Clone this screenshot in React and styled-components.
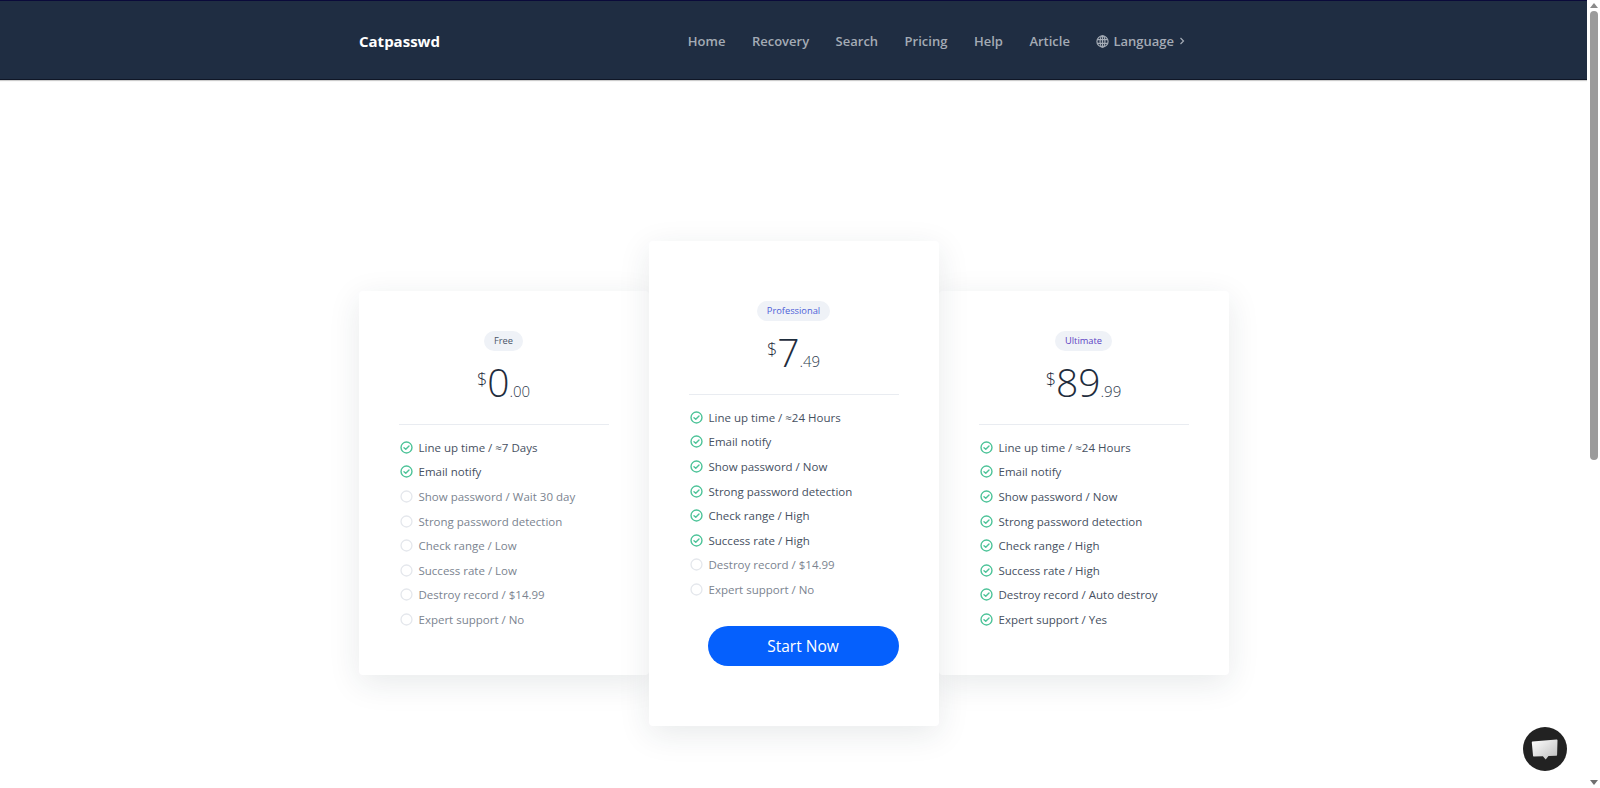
import React from "react";
import styled, { createGlobalStyle } from "styled-components";

const Global = createGlobalStyle`
  html, body { margin: 0; padding: 0; height: 100%; overflow: hidden; background: #fff; }
  body { font-family: "Open Sans", "Noto Sans", sans-serif; color: #1f2d3d; }
  * { box-sizing: border-box; }
`;

const Frame = styled.div`
  display: flex;
  height: 788px;
  width: 1600px;
  overflow: hidden;
`;
const Page = styled.main`
  flex: 1;
  min-width: 0;
  display: flex;
  flex-direction: column;
`;
const Header = styled.header`
  height: 80px;
  background: #1f2d42;
  border-top: 1px solid #0a0a3a;
  border-bottom: 1px solid #0f1626;
  box-shadow: 0 1px 1px rgba(0,0,0,.2);
  display: flex;
  justify-content: center;
`;
const HeaderInner = styled.div`
  width: 871px;
  display: flex;
  align-items: center;
  justify-content: space-between;
  padding: 2px 43px 0 1px;
`;
const Logo = styled.div`
  font-size: 15px;
  font-weight: 700;
  color: #fff;
`;
const Nav = styled.nav`
  display: flex;
  align-items: center;
  gap: 26.5px;
`;
const NavLink = styled.a`
  font-size: 13px;
  font-weight: 600;
  color: #a4abb5;
  display: flex;
  align-items: center;
  gap: 4px;
`;
const Main = styled.section`
  flex: 1;
  display: flex;
  justify-content: center;
  align-items: flex-start;
  padding-top: 161px;
`;
const Card = styled.article`
  width: 290px;
  height: ${p => (p.$featured ? "485px" : "384px")};
  margin-top: ${p => (p.$featured ? "0" : "50px")};
  padding: ${p => (p.$featured ? "60px" : "40px")} 40px 0;
  background: #fff;
  border-radius: 4px;
  position: relative;
  z-index: ${p => (p.$featured ? 2 : 1)};
  box-shadow: 0 8px 32px rgba(31,45,61,.10);
  display: flex;
  flex-direction: column;
`;
const Badge = styled.span`
  align-self: center;
  height: 20px;
  padding: 0 10px;
  border-radius: 10px;
  background: #eff2f7;
  font-size: 9.3px;
  line-height: 20px;
  color: ${p => p.$color};
`;
const Price = styled.div`
  display: flex;
  justify-content: center;
  align-items: baseline;
  margin-top: 4px;
  height: 53px;
  line-height: 53px;
  color: #1f2d3d;
`;
const Sup = styled.span`
  font-size: 18px;
  font-weight: 300;
  position: relative;
  top: -11px;
`;
const Big = styled.span`
  font-size: 39px;
  font-weight: 300;
`;
const Cents = styled.span`
  font-size: 15px;
  font-weight: 300;
  color: #2f3b4d;
`;
const Rule = styled.hr`
  border: 0;
  border-top: 1px solid #e9ecf1;
  margin: 16px 0 10px;
  width: 210px;
`;
const List = styled.ul`
  list-style: none;
  margin: 0;
  padding: 0;
`;
const Item = styled.li`
  height: 24.6px;
  display: flex;
  align-items: center;
  gap: 6px;
  font-size: 11.5px;
  color: ${p => (p.$on ? "#46505f" : "#7b8490")};
`;
const IconBox = styled.svg`
  width: 13px;
  height: 13px;
  flex: none;
  margin-left: 1px;
`;
const StartButton = styled.button`
  align-self: flex-end;
  margin: 24px 0 0;
  width: 191px;
  height: 40px;
  border: 0;
  border-radius: 20px;
  background: #0560fd;
  color: #fff;
  font-family: inherit;
  font-size: 15.5px;
`;
const Track = styled.aside`
  width: 13px;
  flex: none;
  background: #fff;
  display: flex;
  flex-direction: column;
  align-items: center;
  padding: 3px 0;
`;
const Thumb = styled.div`
  width: 8px;
  height: 449px;
  margin-top: 3px;
  border-radius: 4px;
  background: #9b9b9b;
`;
const Arrow = styled.div`
  width: 0;
  height: 0;
  border-left: 4px solid transparent;
  border-right: 4px solid transparent;
  ${p => (p.$up ? "border-bottom: 5px solid #8a8a8a;" : "border-top: 5px solid #6f6f6f; margin-top: auto;")}
`;
const Chat = styled.button`
  position: fixed;
  left: 1523px;
  top: 727px;
  width: 44px;
  height: 44px;
  padding: 0;
  border: 0;
  border-radius: 50%;
  background: #222;
  display: flex;
  align-items: center;
  justify-content: center;
`;

const Check = () => (
  <IconBox viewBox="0 0 14 14" fill="none" stroke="#4cc398" strokeWidth="1.5">
    <circle cx="7" cy="7" r="5.9" />
    <path d="M4.3 7.2l1.9 1.8 3.5-3.6" strokeLinecap="round" strokeLinejoin="round" />
  </IconBox>
);
const Empty = () => (
  <IconBox viewBox="0 0 14 14" fill="none" stroke="#e4e7ec" strokeWidth="1.4">
    <circle cx="7" cy="7" r="5.9" />
  </IconBox>
);

const plans = [
  { name: "Free", color: "#4a5568", big: "0", cents: ".00", items: [
    ["Line up time / ≈7 Days", 1], ["Email notify", 1], ["Show password / Wait 30 day", 0], ["Strong password detection", 0],
    ["Check range / Low", 0], ["Success rate / Low", 0], ["Destroy record / $14.99", 0], ["Expert support / No", 0] ] },
  { name: "Professional", color: "#4c5fd7", big: "7", cents: ".49", featured: true, items: [
    ["Line up time / ≈24 Hours", 1], ["Email notify", 1], ["Show password / Now", 1], ["Strong password detection", 1],
    ["Check range / High", 1], ["Success rate / High", 1], ["Destroy record / $14.99", 0], ["Expert support / No", 0] ] },
  { name: "Ultimate", color: "#5b3fc4", big: "89", cents: ".99", items: [
    ["Line up time / ≈24 Hours", 1], ["Email notify", 1], ["Show password / Now", 1], ["Strong password detection", 1],
    ["Check range / High", 1], ["Success rate / High", 1], ["Destroy record / Auto destroy", 1], ["Expert support / Yes", 1] ] },
];

const Globe = () => (
  <svg width="13" height="13" viewBox="0 0 14 14" fill="none" stroke="#a4abb5" strokeWidth="1.3">
    <circle cx="7" cy="7" r="6" />
    <ellipse cx="7" cy="7" rx="2.6" ry="6" />
    <path d="M1.4 5h11.2M1.4 9h11.2M7 1v12" />
  </svg>
);

export default function App() {
  return (
    <>
      <Global />
      <Frame>
        <Page>
          <Header>
            <HeaderInner>
              <Logo>Catpasswd</Logo>
              <Nav>
                {["Home", "Recovery", "Search", "Pricing", "Help", "Article"].map(n => <NavLink key={n}>{n}</NavLink>)}
                <NavLink>
                  <Globe />Language
                  <svg width="8" height="10" viewBox="0 0 8 10" fill="none" stroke="#a4abb5" strokeWidth="1.2"><path d="M2.5 2l3 3-3 3" /></svg>
                </NavLink>
              </Nav>
            </HeaderInner>
          </Header>
          <Main>
            {plans.map(p => (
              <Card key={p.name} $featured={p.featured}>
                <Badge $color={p.color}>{p.name}</Badge>
                <Price><Sup>$</Sup><Big>{p.big}</Big><Cents>{p.cents}</Cents></Price>
                <Rule />
                <List>
                  {p.items.map(([t, on]) => (
                    <Item key={t} $on={on}>{on ? <Check /> : <Empty />}{t}</Item>
                  ))}
                </List>
                {p.featured && <StartButton>Start Now</StartButton>}
              </Card>
            ))}
          </Main>
        </Page>
        <Track><Arrow $up /><Thumb /><Arrow /></Track>
      </Frame>
      <Chat aria-label="Chat">
        <svg width="28" height="26" viewBox="0 0 28 26">
          <defs><linearGradient id="g" x1="0" y1="0" x2="1" y2="1"><stop offset="0" stopColor="#fff" /><stop offset="1" stopColor="#bdbdbd" /></linearGradient></defs>
          <path d="M1.5 5.5L25.5 3.5c.6 0 1 .3 1 1l-.4 14.3c0 .6-.4 1-1 1L17.5 20l-2.8 3.5-2.8-3.3L3 20.5c-.6 0-1-.3-1-1L.8 6.4c0-.5.2-.8.7-.9z" fill="url(#g)" />
        </svg>
      </Chat>
    </>
  );
}
